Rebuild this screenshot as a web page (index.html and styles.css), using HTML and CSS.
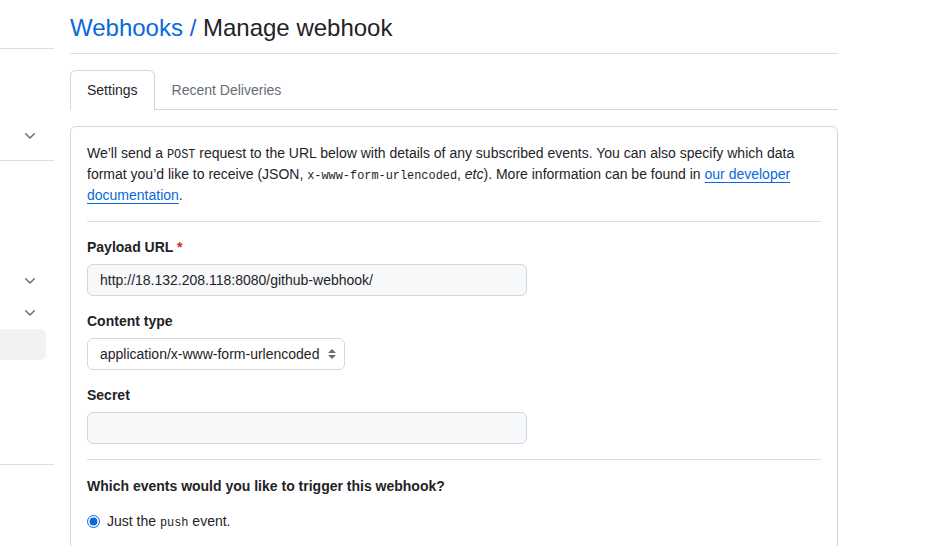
FILE: index.html
```html
<!DOCTYPE html>
<html lang="en">
<head>
<meta charset="utf-8">
<title>Manage webhook</title>
<link rel="stylesheet" href="styles.css">
</head>
<body>
<div class="layout">
  <nav class="sidebar">
    <div class="side-top"></div>
    <div class="side-sec side-sec1">
      <div class="side-row"><svg class="chev" width="16" height="16" viewBox="0 0 16 16"><path d="M12.78 5.22a.749.749 0 0 1 0 1.06l-4.25 4.25a.749.749 0 0 1-1.06 0L3.22 6.28a.749.749 0 1 1 1.06-1.06L8 8.939l3.72-3.719a.749.749 0 0 1 1.06 0Z"/></svg></div>
    </div>
    <div class="side-sec side-sec2">
      <div class="side-row"><svg class="chev" width="16" height="16" viewBox="0 0 16 16"><path d="M12.78 5.22a.749.749 0 0 1 0 1.06l-4.25 4.25a.749.749 0 0 1-1.06 0L3.22 6.28a.749.749 0 1 1 1.06-1.06L8 8.939l3.72-3.719a.749.749 0 0 1 1.06 0Z"/></svg></div>
      <div class="side-row"><svg class="chev" width="16" height="16" viewBox="0 0 16 16"><path d="M12.78 5.22a.749.749 0 0 1 0 1.06l-4.25 4.25a.749.749 0 0 1-1.06 0L3.22 6.28a.749.749 0 1 1 1.06-1.06L8 8.939l3.72-3.719a.749.749 0 0 1 1.06 0Z"/></svg></div>
      <div class="side-row active"></div>
    </div>
  </nav>
  <main class="main">
    <div class="subhead">
      <h2 class="subhead-title"><a class="crumb" href="#">Webhooks</a><span class="sep"> / </span>Manage webhook</h2>
    </div>
    <div class="tabnav">
      <a class="tab selected" href="#">Settings</a>
      <a class="tab" href="#">Recent Deliveries</a>
    </div>
    <form class="card">
      <p class="intro">We’ll send a <code>POST</code> request to the URL below with details of any subscribed events. You can also specify which data format you’d like to receive (JSON, <code>x-www-form-urlencoded</code>, <em>etc</em>). More information can be found in <a class="link" href="#">our developer documentation</a>.</p>
      <div class="divider"></div>
      <div class="group">
        <label class="label" for="url">Payload URL <span class="req">*</span></label>
        <input class="input" id="url" type="text" value="http://18.132.208.118:8080/github-webhook/">
      </div>
      <div class="group">
        <label class="label" for="ctype">Content type</label>
        <select class="select" id="ctype">
          <option>application/x-www-form-urlencoded</option>
          <option>application/json</option>
        </select>
      </div>
      <div class="group">
        <label class="label" for="secret">Secret</label>
        <input class="input" id="secret" type="text" value="">
      </div>
      <div class="divider"></div>
      <h3 class="question">Which events would you like to trigger this webhook?</h3>
      <div class="options">
        <label class="option"><input type="radio" name="ev" class="radio" checked> <span>Just the <code>push</code> event.</span></label>
      </div>
    </form>
  </main>
</div>
</body>
</html>
```
FILE: styles.css
```css
* { box-sizing: border-box; }

html, body { overflow: hidden; }

body {
  margin: 0;
  font-family: "Liberation Sans", Arial, sans-serif;
  font-size: 14px;
  line-height: 1.5;
  color: #1f2328;
  background: #ffffff;
}

.layout {
  display: flex;
  gap: 16px;
  align-items: flex-start;
}

/* Sidebar */
.sidebar {
  width: 54px;
  flex-shrink: 0;
}

.side-top {
  height: 49px;
  border-bottom: 1px solid #d8dee4;
}

.side-sec {
  border-bottom: 1px solid #d8dee4;
  display: flex;
  flex-direction: column;
  gap: 1px;
}

.side-sec1 {
  padding: 71px 0 8px;
}

.side-sec1 .side-row { height: 32px; }

.side-sec2 {
  padding: 104px 0 104px;
}

.side-row {
  width: 46px;
  height: 31px;
  display: flex;
  align-items: center;
  justify-content: flex-end;
  padding-right: 8px;
  border-radius: 0 6px 6px 0;
}

.side-row.active {
  background: #f0f2f4;
}

.chev {
  fill: #656d76;
}

/* Main */
.main {
  width: 768px;
  flex-shrink: 0;
  padding-top: 10px;
}

.subhead {
  border-bottom: 1px solid #d8dee4;
  padding-bottom: 7px;
  margin-bottom: 16px;
}

.subhead-title {
  margin: 0;
  font-size: 24px;
  font-weight: 400;
  line-height: 36px;
}

.crumb {
  color: #0969da;
  text-decoration: none;
}

.sep {
  color: #0969da;
}

.tabnav {
  display: flex;
  border-bottom: 1px solid #d0d7de;
  margin-bottom: 16px;
}

.tab {
  padding: 8px 16px;
  line-height: 23px;
  font-size: 14px;
  color: #656d76;
  text-decoration: none;
  border: 1px solid transparent;
  border-bottom: 0;
  border-radius: 6px 6px 0 0;
  margin-bottom: -1px;
  height: 40px;
}

.tab.selected {
  color: #1f2328;
  background: #ffffff;
  border-color: #d0d7de;
}

.card {
  border: 1px solid #d0d7de;
  border-radius: 6px;
  padding: 16px;
  margin: 0;
  min-height: 460px;
}

.intro {
  margin: 0;
  line-height: 21px;
}

code {
  font-family: "Liberation Mono", "DejaVu Sans Mono", monospace;
  font-size: 85%;
  line-height: 1;
}

.link {
  color: #0969da;
  text-decoration: underline;
  text-underline-offset: 3px;
}

.divider {
  border-top: 1px solid #d8dee4;
  margin: 15px 0 15px;
  height: 0;
}

.group + .group {
  margin-top: 15px;
}

.label {
  display: block;
  font-weight: 700;
  line-height: 21px;
  margin-bottom: 6px;
}

.req {
  color: #d1242f;
}

.input {
  display: block;
  width: 440px;
  height: 32px;
  padding: 5px 12px;
  font: inherit;
  font-size: 14px;
  line-height: 20px;
  color: #1f2328;
  background: #f6f8fa;
  border: 1px solid #d0d7de;
  border-radius: 6px;
  outline: none;
}

.select {
  display: block;
  height: 32px;
  padding: 5px 24px 5px 12px;
  font: inherit;
  font-size: 14px;
  line-height: 20px;
  color: #1f2328;
  background-color: #ffffff;
  background-image: url("data:image/svg+xml,%3Csvg xmlns='http://www.w3.org/2000/svg' width='16' height='16' viewBox='0 0 16 16'%3E%3Cpath fill='%23656d76' d='M4.427 9.427l3.396 3.396a.25.25 0 00.354 0l3.396-3.396A.25.25 0 0011.396 9H4.604a.25.25 0 00-.177.427zM4.427 6.573l3.396-3.396a.25.25 0 01.354 0l3.396 3.396A.25.25 0 0111.396 7H4.604a.25.25 0 01-.177-.427z'/%3E%3C/svg%3E");
  background-repeat: no-repeat;
  background-position: right 4px center;
  background-size: 16px;
  border: 1px solid #d0d7de;
  border-radius: 6px;
  appearance: none;
  -webkit-appearance: none;
  outline: none;
}

.question {
  margin: 16px 0 14px;
  font-size: 14px;
  font-weight: 700;
  line-height: 21px;
}

.options {
  display: flex;
  flex-direction: column;
  gap: 12px;
}

.option {
  display: flex;
  align-items: center;
  gap: 7px;
  line-height: 21px;
}

.radio {
  margin: 0;
  width: 13px;
  height: 13px;
  accent-color: #0969da;
}
```
